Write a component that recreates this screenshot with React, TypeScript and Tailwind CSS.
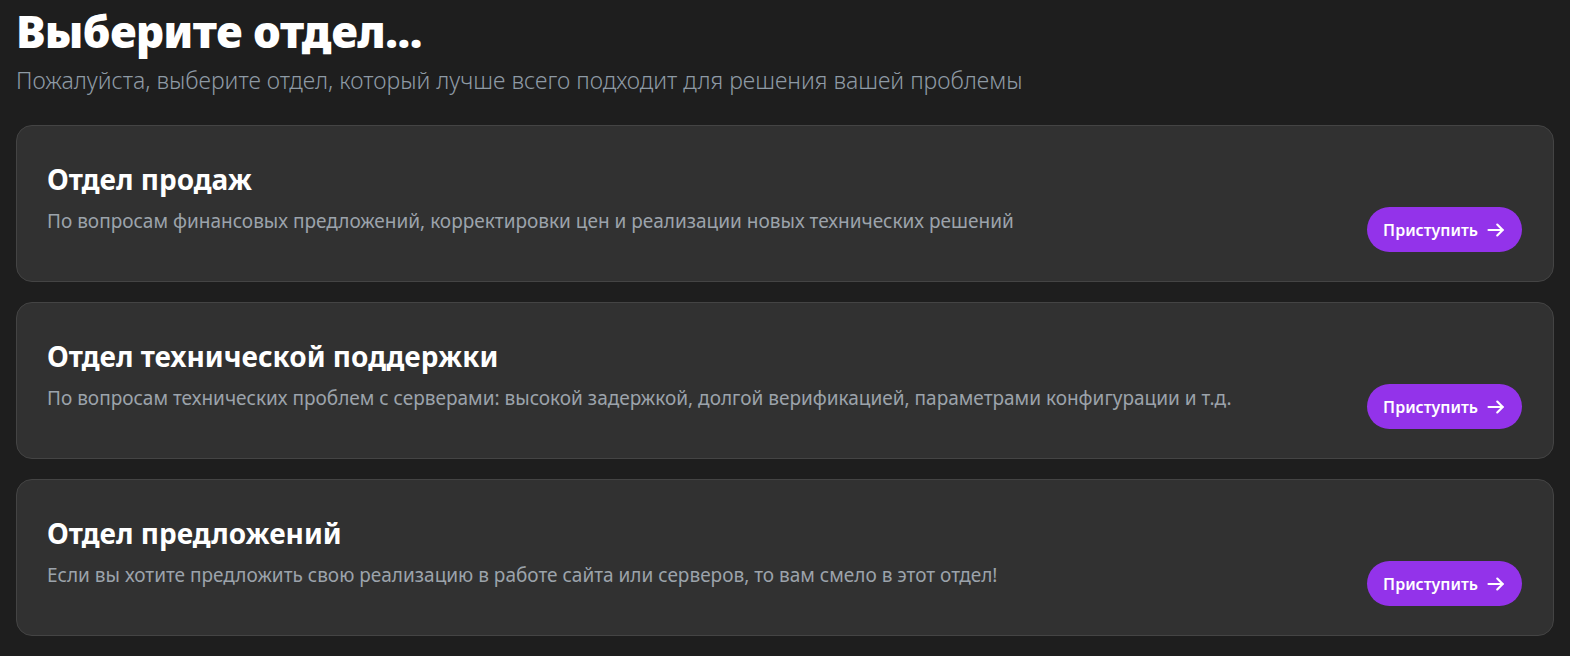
import React from 'react';

const departments = [
  {
    title: 'Отдел продаж',
    text: 'По вопросам финансовых предложений, корректировки цен и реализации новых технических решений',
  },
  {
    title: 'Отдел технической поддержки',
    text: 'По вопросам технических проблем с серверами: высокой задержкой, долгой верификацией, параметрами конфигурации и т.д.',
  },
  {
    title: 'Отдел предложений',
    text: 'Если вы хотите предложить свою реализацию в работе сайта или серверов, то вам смело в этот отдел!',
  },
];

function ArrowRight() {
  return (
    <svg width="20" height="20" viewBox="0 0 24 24" fill="none" stroke="currentColor" strokeWidth="2.6" strokeLinecap="round" strokeLinejoin="round">
      <path d="M3 12h17" />
      <path d="M13.5 5.5L20 12l-6.5 6.5" />
    </svg>
  );
}

export default function App() {
  return (
    <div className="min-h-screen bg-[#1e1e1e] px-4 pt-[4px] pb-6 font-['Noto_Sans',sans-serif]">
      <h1 className="text-[44px] font-black leading-[54px] text-white tracking-[-0.5px]">Выберите отдел...</h1>
      <p className="mt-[6px] text-[23px] font-light leading-[32px] text-[#8e9aa5]">
        Пожалуйста, выберите отдел, который лучше всего подходит для решения вашей проблемы
      </p>

      <div className="mt-[29px] flex flex-col gap-[20px]">
        {departments.map((d) => (
          <div
            key={d.title}
            className="flex h-[157px] justify-between rounded-[16px] border border-[#444] bg-[#313131] pl-[30px] pr-[31px] pb-[29px] pt-[35px]"
          >
            <div>
              <h2 className="text-[28px] font-bold leading-[36px] text-white">{d.title}</h2>
              <p className="mt-[11px] text-[19px] leading-[26px] text-[#9ca3ab]">{d.text}</p>
            </div>
            <button className="flex h-[45px] self-end items-center gap-[8px] rounded-full bg-[#9333ea] px-[16px] text-[16px] font-semibold text-white">
              Приступить
              <ArrowRight />
            </button>
          </div>
        ))}
      </div>
    </div>
  );
}
